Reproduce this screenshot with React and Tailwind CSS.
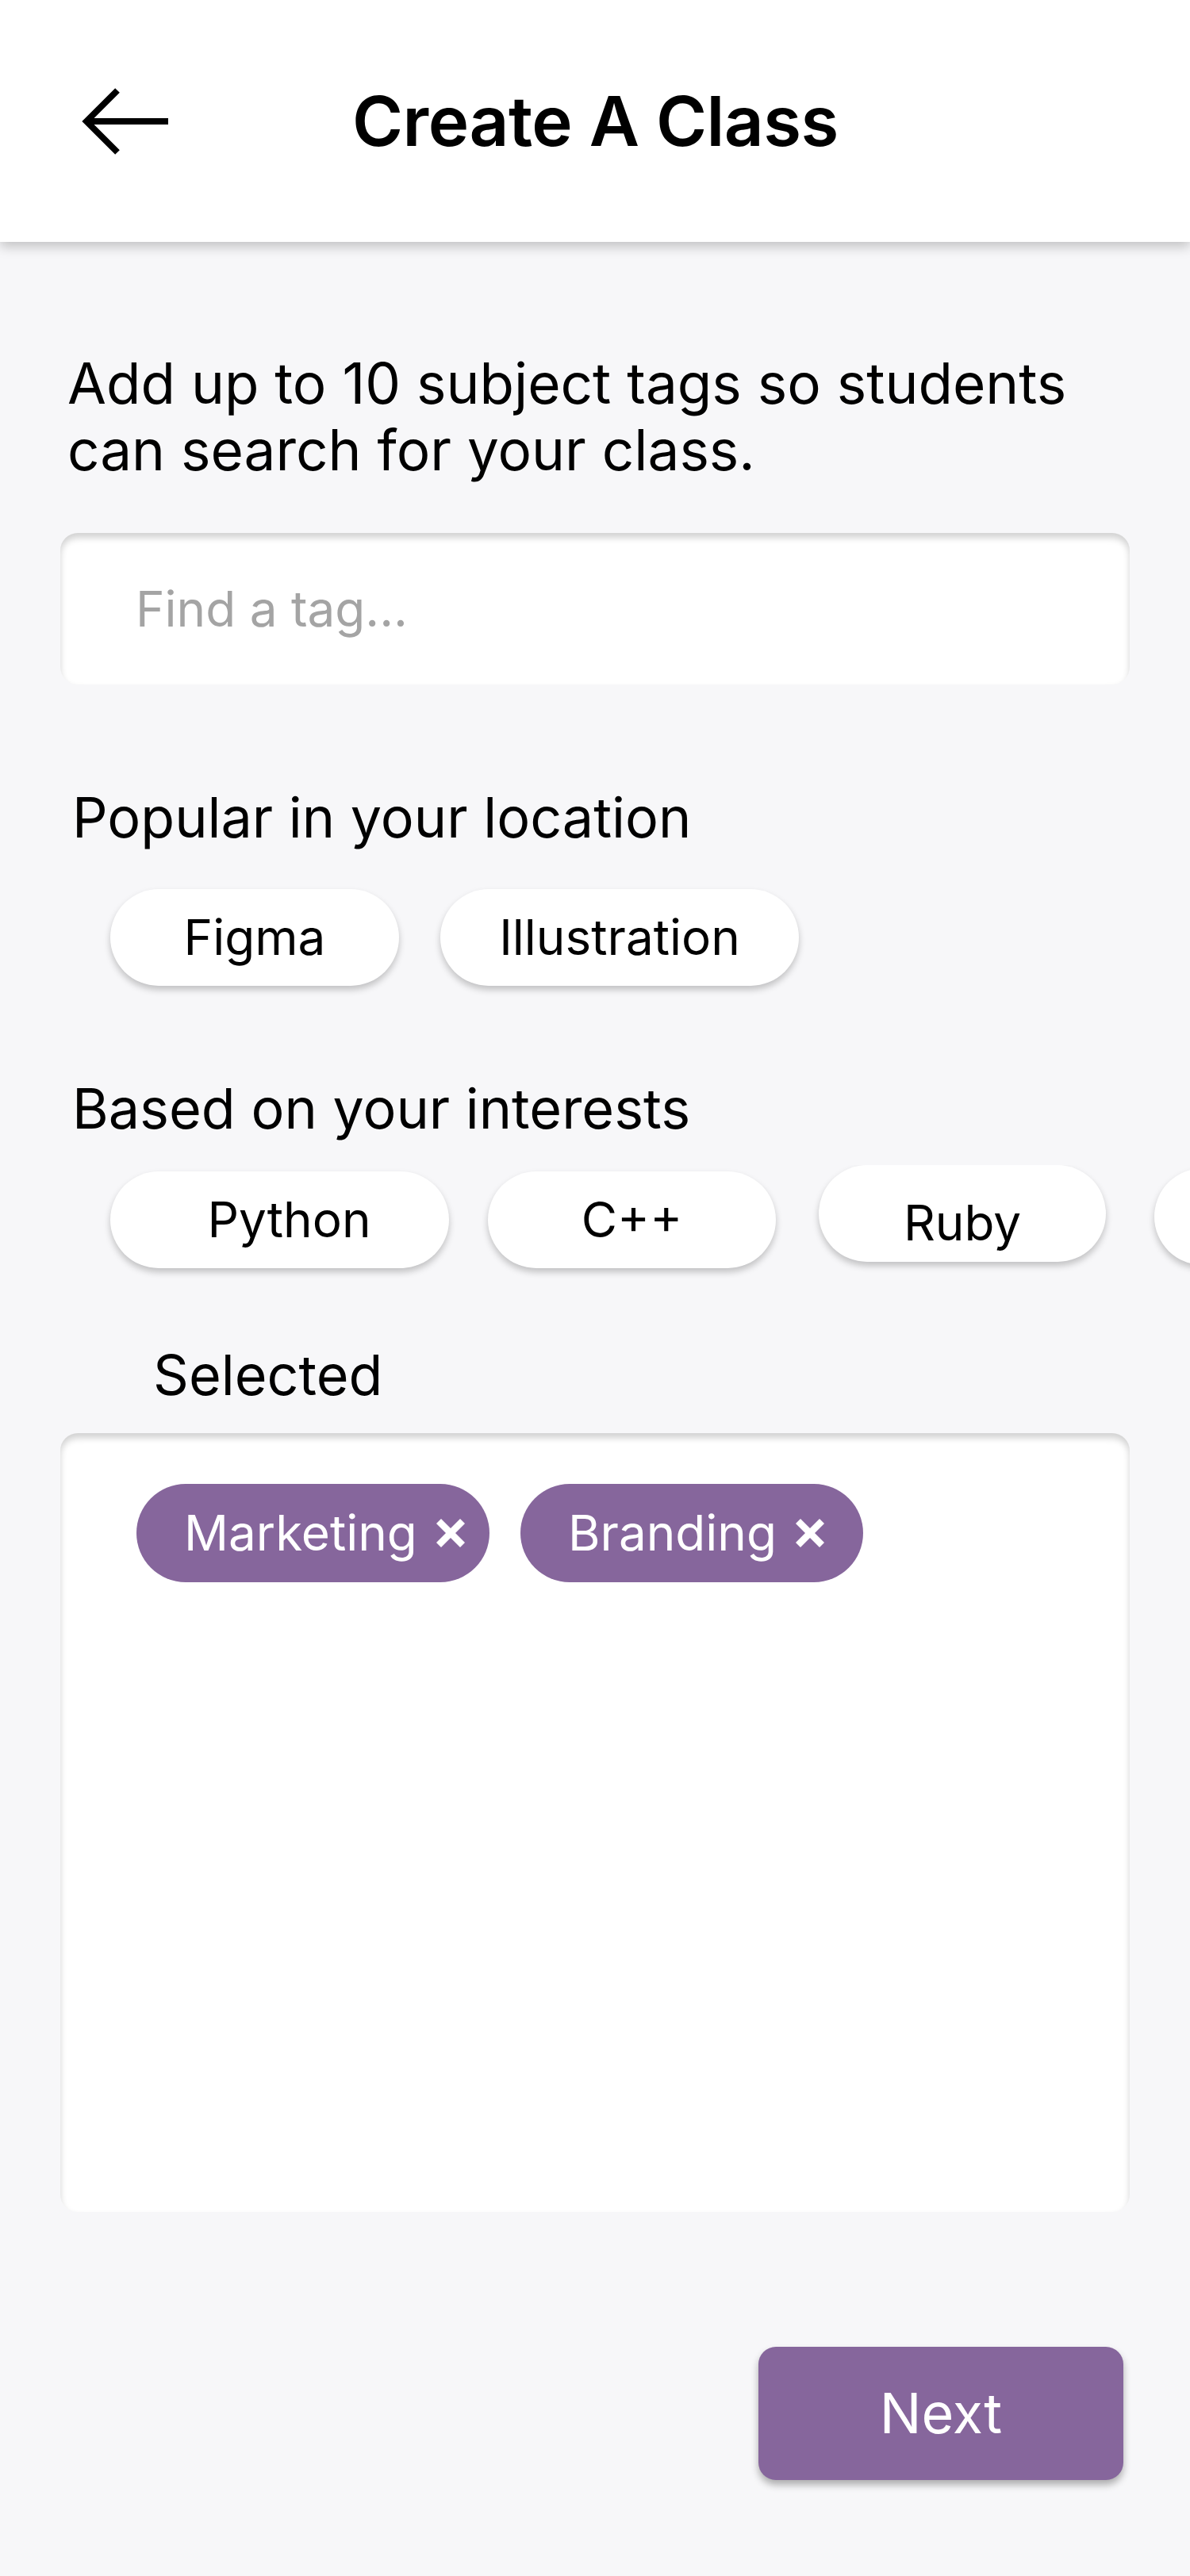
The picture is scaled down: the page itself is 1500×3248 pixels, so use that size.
import React from "react";

function BackArrow() {
  return (
    <svg width="112" height="86" viewBox="0 0 112 86" fill="none">
      <line x1="6" y1="43" x2="110" y2="43" stroke="#000" strokeWidth="8" />
      <polyline points="46,4 7,43 46,82" stroke="#000" strokeWidth="8" fill="none" strokeLinejoin="miter" />
    </svg>
  );
}

function XIcon() {
  return (
    <svg width="36" height="36" viewBox="0 0 36 36" fill="none">
      <line x1="3" y1="3" x2="33" y2="33" stroke="#fff" strokeWidth="8.5" />
      <line x1="33" y1="3" x2="3" y2="33" stroke="#fff" strokeWidth="8.5" />
    </svg>
  );
}

function Chip({ label, className }) {
  return (
    <div
      className={
        "h-[122px] shrink-0 rounded-full bg-white flex items-center justify-center text-[62px] leading-none text-black shadow-[0_5px_8px_rgba(0,0,0,0.22)] " +
        className
      }
    >
      {label}
    </div>
  );
}

function SelectedChip({ label, className }) {
  return (
    <div
      className={
        "h-[124px] shrink-0 rounded-full bg-[#86669c] flex items-center pl-[60px] text-[62px] leading-none text-white " +
        className
      }
    >
      <span>{label}</span>
      <span className="ml-[24px] flex items-center">
        <XIcon />
      </span>
    </div>
  );
}

export default function App() {
  return (
    <div className="w-[1500px] min-h-[3248px] bg-[#f7f7f9] font-[Inter,sans-serif] overflow-hidden">
      <header className="relative z-10 h-[305px] bg-white flex items-center pl-[102px] shadow-[0_6px_14px_rgba(0,0,0,0.22)]">
        <BackArrow />
        <h1 className="ml-[230px] text-[87px] font-semibold leading-none text-black tracking-[-0.5px]">
          Create A Class
        </h1>
      </header>

      <main className="flex flex-col">
        <p className="mt-[136px] pl-[85px] pr-[60px] text-[71px] leading-[84px] text-black">
          Add up to 10 subject tags so students
          <br />
          can search for your class.
        </p>

        <div className="mt-[63px] mx-[76px] h-[191px] rounded-[22px] bg-white flex items-center pl-[95px] shadow-[inset_0_6px_9px_rgba(0,0,0,0.18)]">
          <span className="text-[62px] leading-none text-[#a4a4a4]">Find a tag...</span>
        </div>

        <h2 className="mt-[126px] pl-[91px] text-[70px] leading-[84px] font-normal text-black">
          Popular in your location
        </h2>

        <div className="mt-[48px] pl-[139px] flex items-start">
          <Chip label="Figma" className="w-[364px]" />
          <Chip label="Illustration" className="w-[452px] ml-[52px]" />
        </div>

        <h2 className="mt-[113px] pl-[91px] text-[70px] leading-[84px] font-normal text-black">
          Based on your interests
        </h2>

        <div className="mt-[29px] pl-[139px] flex items-start overflow-hidden pb-[20px] -mb-[20px]">
          <Chip label="Python" className="w-[427px] mt-[8px] pl-[24px]" />
          <Chip label="C++" className="w-[363px] ml-[49px] mt-[8px]" />
          <Chip label="Ruby" className="w-[362px] ml-[54px] pt-[24px]" />
          <Chip label="" className="w-[362px] ml-[61px] mt-[4px]" />
        </div>

        <h2 className="mt-[93px] pl-[193px] text-[70px] leading-[84px] font-normal text-black">
          Selected
        </h2>

        <div className="mt-[31px] mx-[76px] h-[982px] rounded-[22px] bg-white pl-[96px] pt-[64px] shadow-[inset_0_6px_9px_rgba(0,0,0,0.18)]">
          <div className="flex items-start">
            <SelectedChip label="Marketing" className="w-[445px]" />
            <SelectedChip label="Branding" className="w-[432px] ml-[39px]" />
          </div>
        </div>

        <div className="mt-[170px] flex justify-end pr-[84px]">
          <button className="w-[460px] h-[168px] rounded-[22px] bg-[#86669c] text-white text-[70px] leading-none shadow-[0_6px_10px_rgba(0,0,0,0.3)]">
            Next
          </button>
        </div>
      </main>
    </div>
  );
}
